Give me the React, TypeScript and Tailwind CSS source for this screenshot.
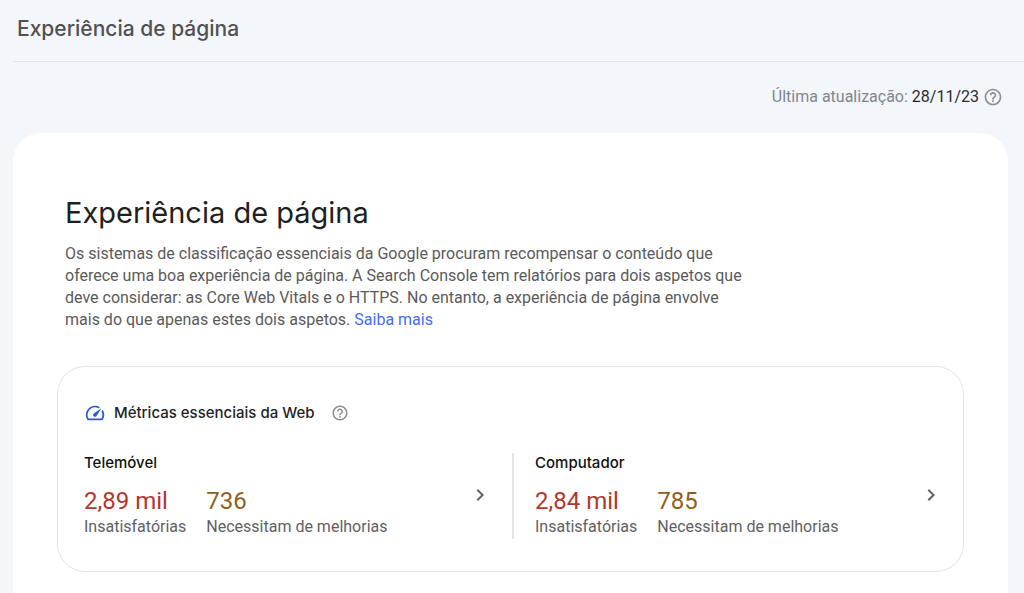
import { MdChevronRight, MdHelpOutline, MdSpeed } from 'react-icons/md';

interface DeviceReport {
  device: string;
  poor: string;
  needsImprovement: string;
}

interface MetricProps {
  value: string;
  label: string;
  valueClasses: string;
}

const reports: DeviceReport[] = [
  { device: 'Telemóvel', poor: '2,89 mil', needsImprovement: '736' },
  { device: 'Computador', poor: '2,84 mil', needsImprovement: '785' },
];

function Metric({ value, label, valueClasses }: MetricProps) {
  return (
    <div className="flex flex-col">
      <span className={valueClasses}>{value}</span>
      <span className="text-base leading-5 text-[#5f5f5f]">{label}</span>
    </div>
  );
}

function DeviceSummary({ device, poor, needsImprovement }: DeviceReport) {
  return (
    <button type="button" className="flex flex-1 items-center justify-between pr-5 pb-0.5 pl-[21px] text-left">
      <div className="flex flex-col gap-3">
        <span className="font-[Inter,sans-serif] text-[15px] leading-5 font-medium text-[#111111]">{device}</span>
        <div className="flex gap-5">
          <Metric value={poor} label="Insatisfatórias" valueClasses="text-2xl leading-8 text-[#b3362c]" />
          <Metric
            value={needsImprovement}
            label="Necessitam de melhorias"
            valueClasses="text-2xl leading-8 text-[#8f5f1e]"
          />
        </div>
      </div>
      <MdChevronRight size={24} className="text-[#5f6368]" />
    </button>
  );
}

export default function App() {
  return (
    <div className="min-h-screen bg-[#f3f6fb] font-[Roboto,sans-serif]">
      <header className="ml-[13px] flex h-[62px] items-start border-b border-[#dfe3e6] pt-[13px] pl-1">
        <h1 className="font-[Inter,sans-serif] text-[21px] leading-8 font-medium text-[#505151]">
          Experiência de página
        </h1>
      </header>

      <div className="flex items-center justify-end gap-1 pt-[23px] pr-[21px] pb-6">
        <p className="text-base leading-6 text-[#80868b]">
          Última atualização: <span className="text-[#2b2c2e]">28/11/23</span>
        </p>
        <button type="button" aria-label="Ajuda">
          <MdHelpOutline size={20} className="text-[#8b8e91]" />
        </button>
      </div>

      <main className="mr-4 ml-[13px] min-h-[460px] rounded-t-[28px] bg-white px-11 pt-[60px]">
        <div className="px-2">
          <h2 className="font-[Inter,sans-serif] text-[29px] leading-10 text-[#1f1f1f]">Experiência de página</h2>
          <p className="mt-[10px] max-w-[684px] text-base leading-[22px] text-[#5a5a5a]">
            Os sistemas de classificação essenciais da Google procuram recompensar o conteúdo que oferece uma boa
            experiência de página. A Search Console tem relatórios para dois aspetos que deve considerar: as Core Web
            Vitals e o HTTPS. No entanto, a experiência de página envolve mais do que apenas estes dois aspetos.{' '}
            <a href="#" className="text-[#456df0]">
              Saiba mais
            </a>
          </p>
        </div>

        <section className="mt-[35px] rounded-[28px] border border-[#e3e3e3] pt-[34px] pb-8 pl-[5px]">
          <div className="flex items-center pl-[21px]">
            <MdSpeed size={22} className="text-[#2c5bd8]" />
            <h3 className="ml-2 font-[Inter,sans-serif] text-[15px] leading-6 font-medium text-[#1f1f1f]">
              Métricas essenciais da Web
            </h3>
            <button type="button" aria-label="Ajuda" className="ml-4">
              <MdHelpOutline size={18} className="text-[#8b8e91]" />
            </button>
          </div>
          <div className="mt-7 flex divide-x-2 divide-[#e3e3e3]">
            {reports.map((report) => (
              <DeviceSummary key={report.device} {...report} />
            ))}
          </div>
        </section>
      </main>
    </div>
  );
}
